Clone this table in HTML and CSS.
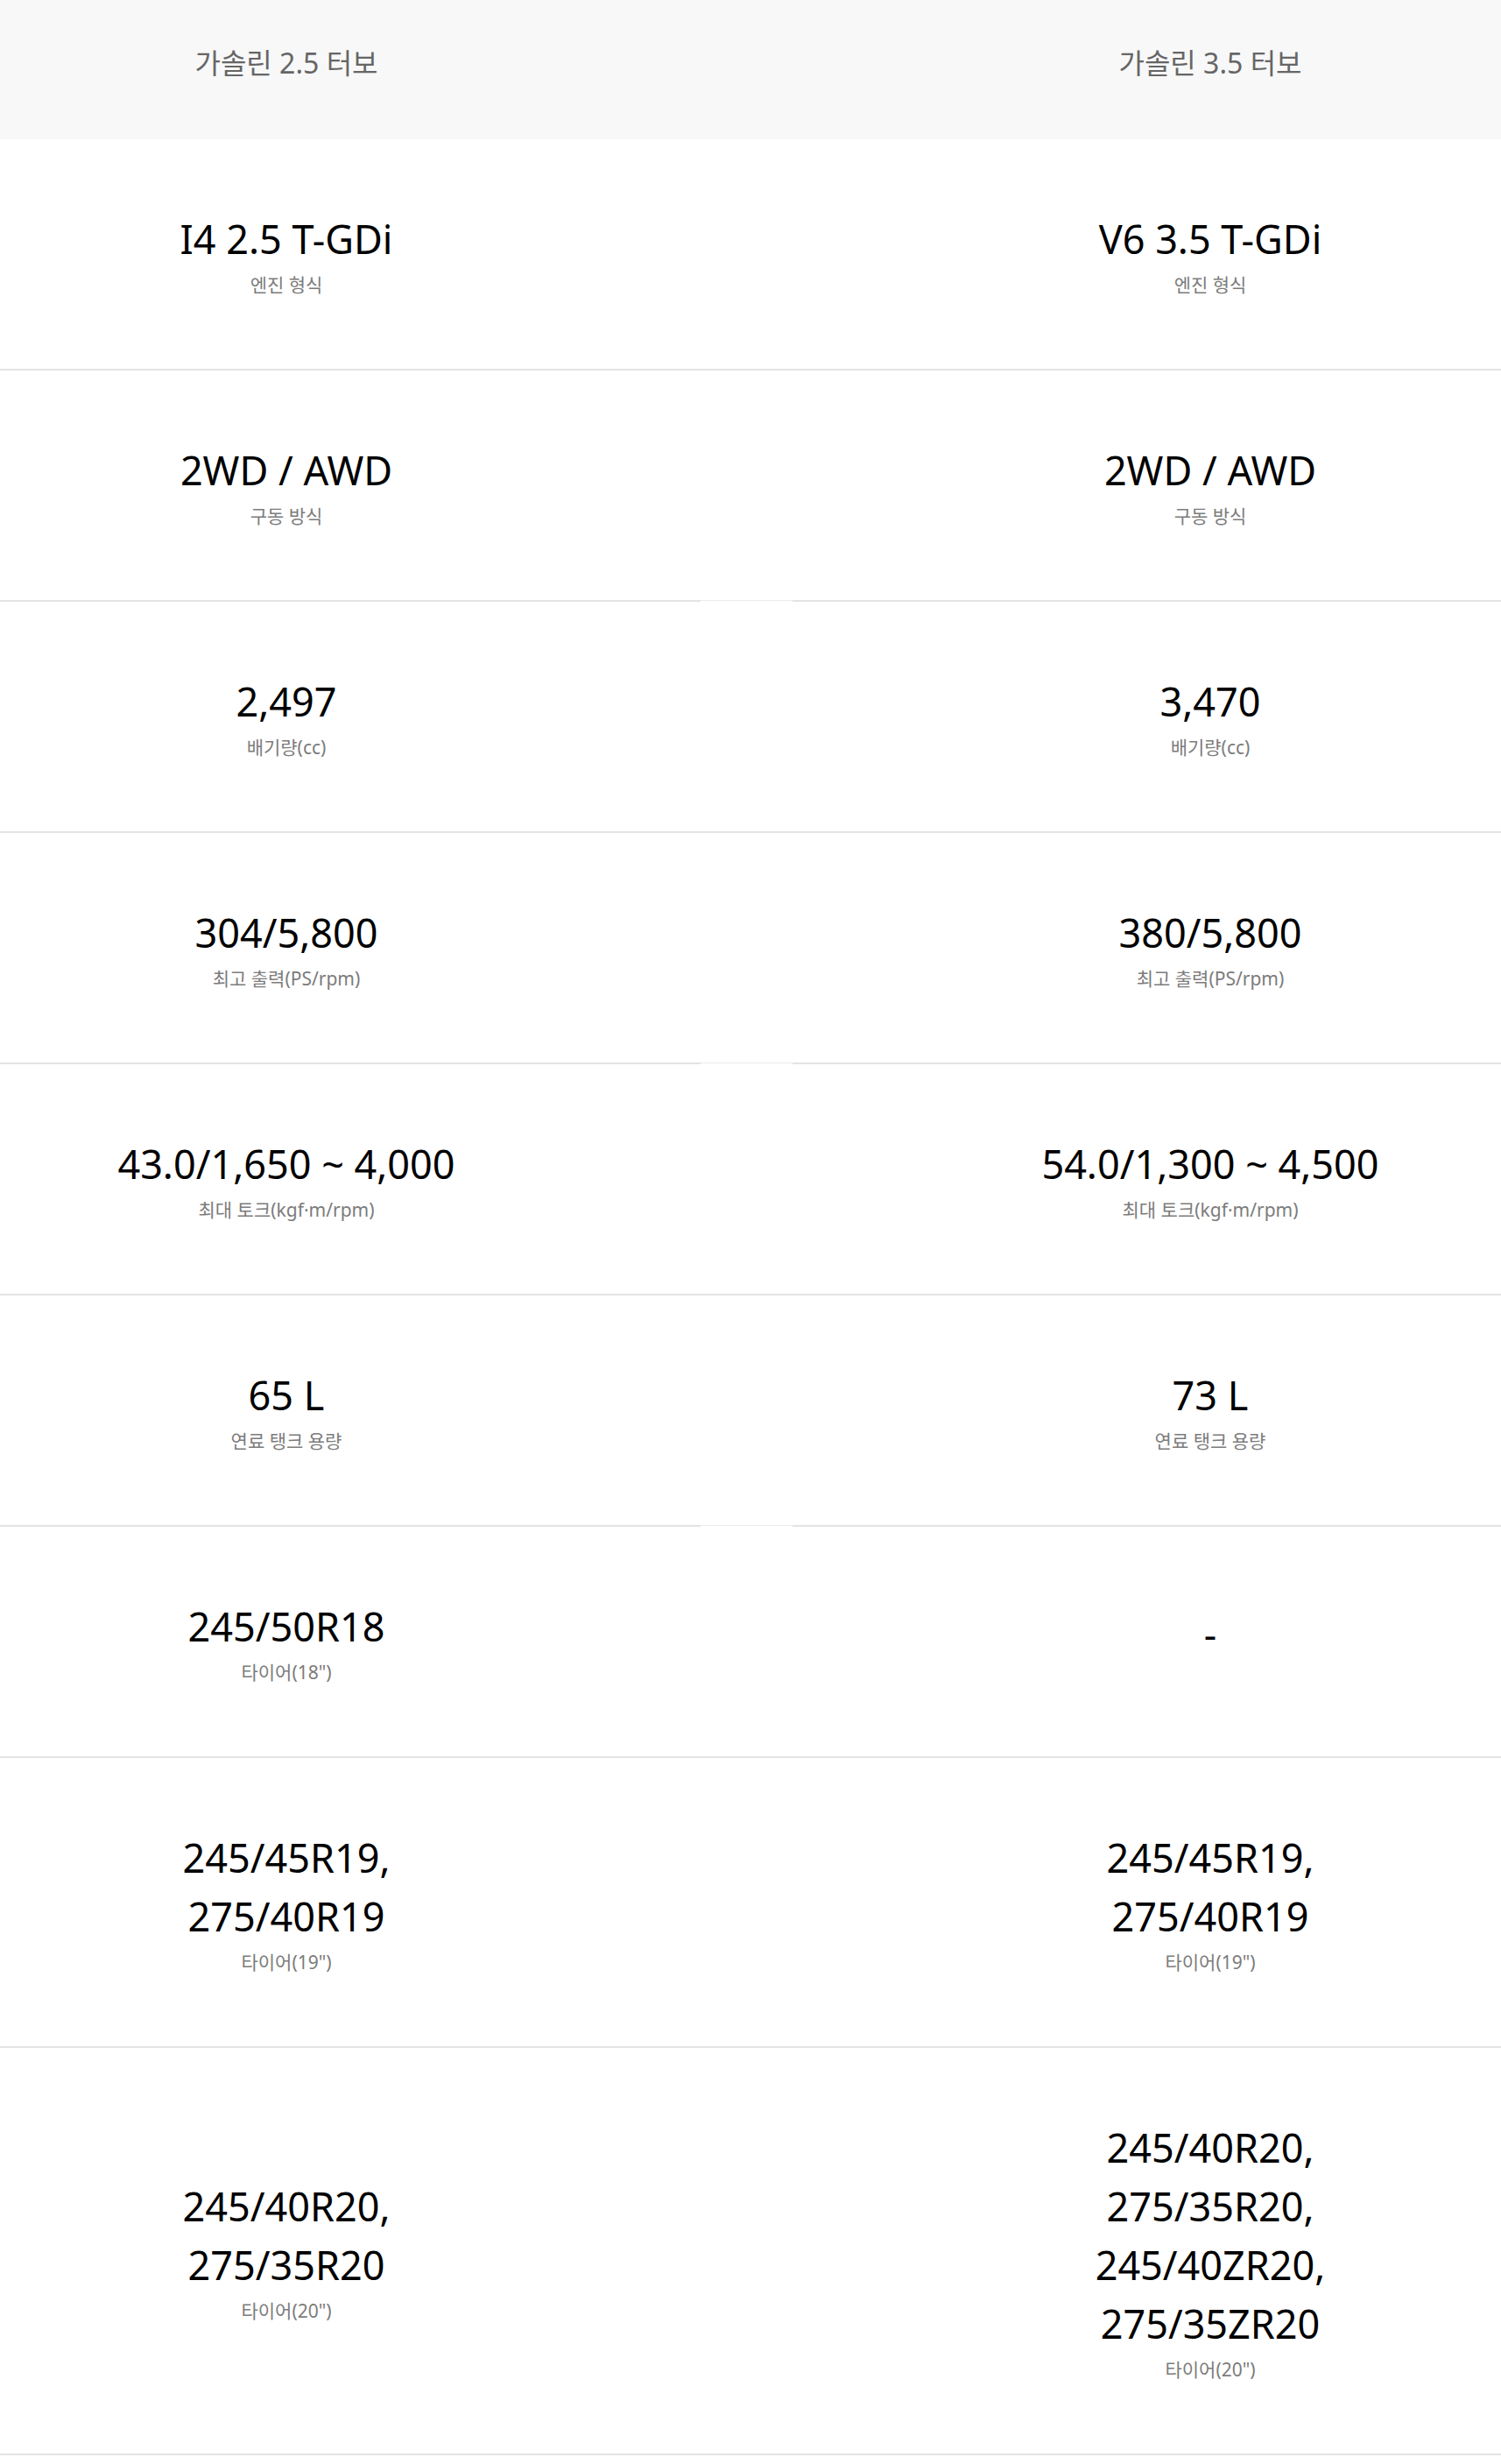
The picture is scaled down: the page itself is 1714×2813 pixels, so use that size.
FILE: index.html
```html
<!DOCTYPE html>
<html lang="ko">
<head>
<meta charset="utf-8">
<title>사양 비교</title>
<link rel="stylesheet" href="styles.css">
</head>
<body>
<div class="spec">
  <div class="spec-head">
    <div class="cell"><span class="head-title">가솔린 2.5 터보</span></div>
    <div class="spacer"></div>
    <div class="cell"><span class="head-title">가솔린 3.5 터보</span></div>
  </div>

  <div class="row">
    <div class="cell"><p class="val">I4 2.5 T-GDi</p><p class="lbl">엔진 형식</p></div>
    <div class="spacer"></div>
    <div class="cell"><p class="val">V6 3.5 T-GDi</p><p class="lbl">엔진 형식</p></div>
  </div>

  <div class="row row-split">
    <div class="cell"><p class="val">2WD / AWD</p><p class="lbl">구동 방식</p></div>
    <div class="spacer"></div>
    <div class="cell"><p class="val">2WD / AWD</p><p class="lbl">구동 방식</p></div>
  </div>

  <div class="row">
    <div class="cell"><p class="val">2,497</p><p class="lbl">배기량(cc)</p></div>
    <div class="spacer"></div>
    <div class="cell"><p class="val">3,470</p><p class="lbl">배기량(cc)</p></div>
  </div>

  <div class="row row-split">
    <div class="cell"><p class="val">304/5,800</p><p class="lbl">최고 출력(PS/rpm)</p></div>
    <div class="spacer"></div>
    <div class="cell"><p class="val">380/5,800</p><p class="lbl">최고 출력(PS/rpm)</p></div>
  </div>

  <div class="row">
    <div class="cell"><p class="val">43.0/1,650 ~ 4,000</p><p class="lbl">최대 토크(kgf·m/rpm)</p></div>
    <div class="spacer"></div>
    <div class="cell"><p class="val">54.0/1,300 ~ 4,500</p><p class="lbl">최대 토크(kgf·m/rpm)</p></div>
  </div>

  <div class="row row-split">
    <div class="cell"><p class="val">65 L</p><p class="lbl">연료 탱크 용량</p></div>
    <div class="spacer"></div>
    <div class="cell"><p class="val">73 L</p><p class="lbl">연료 탱크 용량</p></div>
  </div>

  <div class="row">
    <div class="cell"><p class="val">245/50R18</p><p class="lbl">타이어(18")</p></div>
    <div class="spacer"></div>
    <div class="cell cell-empty"><p class="val">-</p></div>
  </div>

  <div class="row">
    <div class="cell"><p class="val">245/45R19,<br>275/40R19</p><p class="lbl">타이어(19")</p></div>
    <div class="spacer"></div>
    <div class="cell"><p class="val">245/45R19,<br>275/40R19</p><p class="lbl">타이어(19")</p></div>
  </div>

  <div class="row">
    <div class="cell"><p class="val">245/40R20,<br>275/35R20</p><p class="lbl">타이어(20")</p></div>
    <div class="spacer"></div>
    <div class="cell"><p class="val">245/40R20,<br>275/35R20,<br>245/40ZR20,<br>275/35ZR20</p><p class="lbl">타이어(20")</p></div>
  </div>
</div>
</body>
</html>
```

FILE: styles.css
```css
html, body {
  margin: 0;
  padding: 0;
  background: #ffffff;
}

body {
  font-family: "Noto Sans", "Noto Sans CJK KR", sans-serif;
  color: #000;
}

.spec {
  width: 1714px;
}

.spec-head,
.row {
  display: grid;
  grid-template-columns: 654px 1fr 664px;
  align-items: center;
}

.spec-head {
  background: #f8f8f8;
  height: 159px;
  box-sizing: border-box;
  padding: 49px 0 64px;
  align-items: start;
}

.head-title {
  font-family: "Noto Sans", "Noto Sans CJK KR", sans-serif;
  font-size: 32px;
  line-height: 46px;
  color: #666666;
}

.cell {
  text-align: center;
}

.cell-empty {
  padding-bottom: 20px;
}

.row {
  position: relative;
  padding: 80px 0;
  border-bottom: 2px solid #e3e3e3;
}

.row-split::after {
  content: "";
  position: absolute;
  left: 800px;
  width: 105px;
  bottom: -2px;
  height: 2px;
  background: linear-gradient(#ececec 50%, #ffffff 50%);
}

.val {
  margin: 0;
  font-size: 45px;
  line-height: 67px;
  color: #000;
}

.lbl {
  margin: 4px 0 0;
  font-family: "Noto Sans", "Noto Sans CJK KR", sans-serif;
  font-size: 21px;
  line-height: 31px;
  color: #7c7c7c;
}
```
